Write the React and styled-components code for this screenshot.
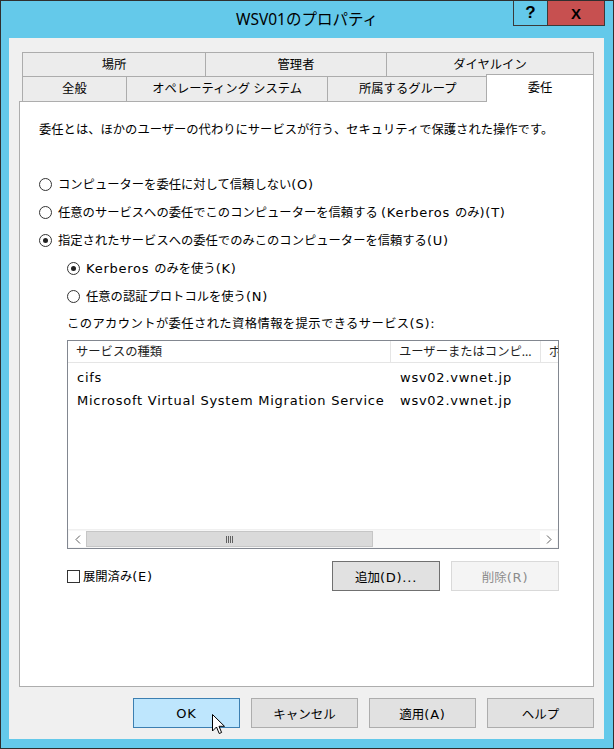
import React from "react";
import styled, { createGlobalStyle } from "styled-components";

const GlobalStyle = createGlobalStyle`
  html, body {
    margin: 0;
    padding: 0;
    background: #ffffff;
  }
  * {
    box-sizing: border-box;
  }
`;

const uiFont = `"Noto Sans", "Noto Sans CJK JP", sans-serif`;

// window frame
const Window = styled.div`
  position: relative;
  width: 614px;
  height: 749px;
  background: #64c9ea;
  border: 1px solid #2f2f2f;
  display: flex;
  flex-direction: column;
  font-family: ${uiFont};
  font-size: 12.3px;
  color: #000;
  overflow: hidden;
`;

// latin words are wider in the original UI font
const Latin = styled.span`
  font-family: "DejaVu Sans", "Verdana", sans-serif;
  font-size: 13px;
  letter-spacing: 0.75px;
`;

const TitleBar = styled.div`
  height: 37px;
  display: grid;
  grid-template-columns: 1fr auto 1fr;
  align-items: start;
`;

const Title = styled.div`
  font-size: 15.5px;
  line-height: 37px;
  color: #000;
  white-space: nowrap;
`;

const Caption = styled.div`
  justify-self: end;
  display: flex;
  margin-top: -1px;
  margin-right: 8px;
`;

const CaptionButton = styled.div`
  width: ${(p) => p.$w}px;
  height: 26px;
  display: flex;
  align-items: center;
  justify-content: center;
  background: ${(p) => (p.$close ? "#c75050" : "transparent")};
  border: 1px solid #3a3a3a;
  border-left: ${(p) => (p.$close ? "none" : "1px solid #3a3a3a")};
  font-family: "Liberation Sans", sans-serif;
  font-weight: bold;
  font-size: ${(p) => (p.$close ? 15 : 17)}px;
  color: #000;
`;

const Client = styled.div`
  flex: 1;
  margin: 0 9px 9px 8px;
  background: #f0f0f0;
  padding: 14px 10px 0 10px;
  display: flex;
  flex-direction: column;
`;

// tabs
const Tabs = styled.div`
  padding-left: 3px;
  display: flex;
  flex-direction: column;
`;

const TabRow = styled.div`
  display: flex;
  align-items: flex-start;
`;

const Tab = styled.div`
  position: relative;
  width: ${(p) => p.$w}px;
  height: ${(p) => (p.$active ? 28 : p.$top ? 24 : 25)}px;
  margin-left: ${(p) => (p.$first ? 0 : p.$active ? -2 : -1)}px;
  margin-top: ${(p) => (p.$active ? -2 : 0)}px;
  margin-bottom: ${(p) => (p.$active ? -1 : 0)}px;
  z-index: ${(p) => (p.$active ? 2 : 0)};
  background: ${(p) => (p.$active ? "#ffffff" : "#ececec")};
  border: 1px solid #acacac;
  border-bottom: none;
  display: flex;
  align-items: ${(p) => (p.$active ? "flex-start" : "center")};
  padding-top: ${(p) => (p.$active ? 3 : 0)}px;
  justify-content: center;
  white-space: nowrap;
  line-height: 20px;
`;

const Panel = styled.div`
  position: relative;
  z-index: 1;
  height: 586px;
  background: #ffffff;
  border: 1px solid #adadad;
  padding: 0 19px;
`;

const Desc = styled.div`
  margin-top: 18px;
  line-height: 20px;
  white-space: nowrap;
`;

const RadioGroup = styled.div`
  margin-top: 34px;
  display: flex;
  flex-direction: column;
  gap: 8px;
`;

const RadioRow = styled.div`
  display: flex;
  align-items: center;
  gap: 6px;
  height: 20px;
  padding-left: ${(p) => (p.$sub ? 28 : 0)}px;
  white-space: nowrap;
`;

const RadioCircle = styled.span`
  width: 13px;
  height: 13px;
  border-radius: 50%;
  border: 1px solid #333;
  background: #fff;
  display: flex;
  align-items: center;
  justify-content: center;
  flex: none;
  &::after {
    content: "";
    width: 5px;
    height: 5px;
    border-radius: 50%;
    background: ${(p) => (p.$checked ? "#222" : "transparent")};
  }
`;

const ListLabel = styled.div`
  margin-top: 8px;
  padding-left: 28px;
  line-height: 20px;
  white-space: nowrap;
  letter-spacing: 0.4px;
`;

const ListBox = styled.div`
  margin: 6px 0 0 28px;
  width: 492px;
  height: 209px;
  border: 1px solid #828790;
  background: #fff;
  display: flex;
  flex-direction: column;
  overflow: hidden;
`;

const Grid = styled.div`
  display: grid;
  grid-template-columns: 323px 150px 60px;
`;

const HeaderCell = styled.div`
  height: 22px;
  line-height: 21px;
  padding-left: 8px;
  border-right: 1px solid #e5e5e5;
  border-bottom: 1px solid #e5e5e5;
  white-space: nowrap;
  overflow: hidden;
  color: #1e1e1e;
`;

const ListBody = styled.div`
  flex: 1;
  padding-top: 3px;
`;

const Cell = styled.div`
  height: 23px;
  line-height: 23px;
  padding-left: 9px;
  white-space: nowrap;
  overflow: hidden;
`;

const ScrollBar = styled.div`
  height: 19px;
  display: flex;
  background: #f7f7f7;
  border-top: 1px solid #f0f0f0;
  padding: 1px;
`;

const ScrollArrow = styled.div`
  width: 17px;
  display: flex;
  align-items: center;
  justify-content: center;
  background: #fff;
  margin-left: ${(p) => (p.$right ? "auto" : 0)};
`;

const Thumb = styled.div`
  width: 287px;
  background: #dadada;
  border: 1px solid #c6c6c6;
  display: flex;
  align-items: center;
  justify-content: center;
`;

const ControlsRow = styled.div`
  margin: 12px 0 0 28px;
  width: 492px;
  display: flex;
  align-items: center;
`;

const CheckLabel = styled.label`
  display: flex;
  align-items: center;
  gap: 3px;
  white-space: nowrap;
  margin-right: auto;
`;

const CheckBox = styled.span`
  width: 13px;
  height: 13px;
  border: 1px solid #333;
  background: #fff;
`;

const Button = styled.button`
  width: ${(p) => p.$w || 108}px;
  height: 30px;
  margin-left: ${(p) => p.$gap || 0}px;
  font-family: ${uiFont};
  font-size: 12.5px;
  padding: 0;
  color: ${(p) => (p.$disabled ? "#8c8c8c" : "#000")};
  background: ${(p) =>
    p.$hover ? "#bee6fd" : p.$disabled ? "#f4f4f4" : "#e1e1e1"};
  border: 1px solid
    ${(p) =>
      p.$hover
        ? "#3c7fb1"
        : p.$default
        ? "#707070"
        : p.$disabled
        ? "#d9d9d9"
        : "#adadad"};
  white-space: nowrap;
`;

const Footer = styled.div`
  display: flex;
  justify-content: flex-end;
  gap: 11px;
  margin-top: 11px;
`;

const Cursor = styled.svg`
  position: absolute;
  left: 211px;
  top: 713px;
  z-index: 5;
`;

const Chevron = ({ right }) => (
  <svg width="6" height="9" viewBox="0 0 6 9">
    <polyline
      points={right ? "1,0.5 5,4.5 1,8.5" : "5,0.5 1,4.5 5,8.5"}
      fill="none"
      stroke="#606060"
      strokeWidth="1"
    />
  </svg>
);

const Grip = () => (
  <svg width="8" height="7" viewBox="0 0 8 7">
    {[0, 2, 4, 6].map((x) => (
      <rect key={x} x={x} y="0" width="1" height="7" fill="#606060" />
    ))}
  </svg>
);

const topTabs = [
  { label: "場所", w: 184 },
  { label: "管理者", w: 182 },
  { label: "ダイヤルイン", w: 208 },
];

const bottomTabs = [
  { label: "全般", w: 105 },
  { label: "オペレーティング システム", w: 203 },
  { label: "所属するグループ", w: 161 },
];

const services = [
  ["cifs", "wsv02.vwnet.jp"],
  ["Microsoft Virtual System Migration Service", "wsv02.vwnet.jp"],
];

export default function App() {
  return (
    <>
      <GlobalStyle />
      <Window>
        <TitleBar>
          <span />
          <Title>WSV01のプロパティ</Title>
          <Caption>
            <CaptionButton $w={35}>?</CaptionButton>
            <CaptionButton $w={57} $close>
              X
            </CaptionButton>
          </Caption>
        </TitleBar>

        <Client>
          <Tabs>
            <TabRow>
              {topTabs.map((t, i) => (
                <Tab key={t.label} $w={t.w} $top $first={i === 0}>
                  {t.label}
                </Tab>
              ))}
            </TabRow>
            <TabRow>
              {bottomTabs.map((t, i) => (
                <Tab key={t.label} $w={t.w} $first={i === 0}>
                  {t.label}
                </Tab>
              ))}
              <Tab $w={108} $active>
                委任
              </Tab>
            </TabRow>
          </Tabs>

          <Panel>
            <Desc>
              委任とは、ほかのユーザーの代わりにサービスが行う、セキュリティで保護された操作です。
            </Desc>

            <RadioGroup>
              <RadioRow>
                <RadioCircle />
                <span>
                  コンピューターを委任に対して信頼しない<Latin>(O)</Latin>
                </span>
              </RadioRow>
              <RadioRow>
                <RadioCircle />
                <span>
                  任意のサービスへの委任でこのコンピューターを信頼する{" "}
                  <Latin>(Kerberos </Latin>のみ<Latin>)(T)</Latin>
                </span>
              </RadioRow>
              <RadioRow>
                <RadioCircle $checked />
                <span>
                  指定されたサービスへの委任でのみこのコンピューターを信頼する
                  <Latin>(U)</Latin>
                </span>
              </RadioRow>
              <RadioRow $sub>
                <RadioCircle $checked />
                <span>
                  <Latin>Kerberos </Latin>のみを使う<Latin>(K)</Latin>
                </span>
              </RadioRow>
              <RadioRow $sub>
                <RadioCircle />
                <span>
                  任意の認証プロトコルを使う<Latin>(N)</Latin>
                </span>
              </RadioRow>
            </RadioGroup>

            <ListLabel>
              このアカウントが委任された資格情報を提示できるサービス
              <Latin>(S):</Latin>
            </ListLabel>

            <ListBox>
              <Grid>
                <HeaderCell>サービスの種類</HeaderCell>
                <HeaderCell>ユーザーまたはコンピ...</HeaderCell>
                <HeaderCell>ポート</HeaderCell>
              </Grid>
              <ListBody>
                {services.map(([name, host]) => (
                  <Grid key={name}>
                    <Cell>
                      <Latin>{name}</Latin>
                    </Cell>
                    <Cell>
                      <Latin>{host}</Latin>
                    </Cell>
                    <Cell />
                  </Grid>
                ))}
              </ListBody>
              <ScrollBar>
                <ScrollArrow>
                  <Chevron />
                </ScrollArrow>
                <Thumb>
                  <Grip />
                </Thumb>
                <ScrollArrow $right>
                  <Chevron right />
                </ScrollArrow>
              </ScrollBar>
            </ListBox>

            <ControlsRow>
              <CheckLabel>
                <CheckBox />
                <span>
                  展開済み<Latin>(E)</Latin>
                </span>
              </CheckLabel>
              <Button $default>
                追加<Latin>(D)...</Latin>
              </Button>
              <Button $disabled $gap={11}>
                削除<Latin>(R)</Latin>
              </Button>
            </ControlsRow>
          </Panel>

          <Footer>
            <Button $w={107} $hover>
              <Latin>OK</Latin>
            </Button>
            <Button $w={107}>キャンセル</Button>
            <Button $w={107}>
              適用<Latin>(A)</Latin>
            </Button>
            <Button $w={107}>ヘルプ</Button>
          </Footer>
        </Client>

        <Cursor width="13" height="21" viewBox="0 0 13 21">
          <path
            d="M0.5 0.5 L0.5 17 L4.5 13 L7.2 19.5 L9.6 18.5 L7 12.3 L12.5 12.3 Z"
            fill="#fff"
            stroke="#000"
            strokeWidth="1"
            strokeLinejoin="miter"
          />
        </Cursor>
      </Window>
    </>
  );
}
